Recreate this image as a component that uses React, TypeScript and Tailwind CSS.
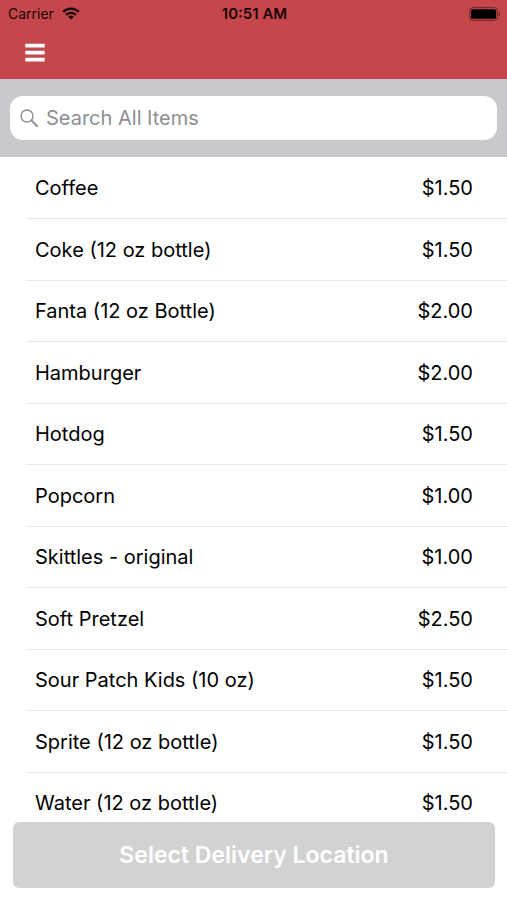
const items = [
  { name: "Coffee", price: "$1.50" },
  { name: "Coke (12 oz bottle)", price: "$1.50" },
  { name: "Fanta (12 oz Bottle)", price: "$2.00" },
  { name: "Hamburger", price: "$2.00" },
  { name: "Hotdog", price: "$1.50" },
  { name: "Popcorn", price: "$1.00" },
  { name: "Skittles - original", price: "$1.00" },
  { name: "Soft Pretzel", price: "$2.50" },
  { name: "Sour Patch Kids (10 oz)", price: "$1.50" },
  { name: "Sprite (12 oz bottle)", price: "$1.50" },
  { name: "Water (12 oz bottle)", price: "$1.50" },
];

function WifiIcon() {
  return (
    <svg className="w-[18px] h-[13px]" viewBox="0 0 18 13" fill="none" stroke="currentColor" strokeWidth={2.3}>
      <path d="M1.2 4.9a11 11 0 0 1 15.6 0" />
      <path d="M4.1 7.9a6.9 6.9 0 0 1 9.8 0" />
      <path d="M9 12.6 6.2 9.9a4 4 0 0 1 5.6 0Z" fill="currentColor" stroke="none" />
    </svg>
  );
}

function BatteryIcon() {
  return (
    <svg className="w-8 h-[14px]" viewBox="0 0 32 14">
      <rect x="0.7" y="0.7" width="27.6" height="12.6" rx="3" fill="none" stroke="black" strokeOpacity="0.5" />
      <rect x="2" y="2.2" width="25" height="9.6" rx="1.6" fill="black" />
      <path d="M29.8 4.8v4.4c1.7-.7 1.7-3.7 0-4.4Z" fill="black" fillOpacity="0.5" />
    </svg>
  );
}

function StatusBar() {
  return (
    <div className="grid grid-cols-3 items-center h-[27px] pl-2 pr-[6px] text-sm text-[#1a0506]">
      <div className="flex items-center gap-2">
        <span>Carrier</span>
        <WifiIcon />
      </div>
      <span className="text-center text-[15px] font-semibold">10:51 AM</span>
      <div className="flex justify-end">
        <BatteryIcon />
      </div>
    </div>
  );
}

export default function App() {
  return (
    <div className="flex flex-col h-screen bg-white text-black font-['Inter',sans-serif]">
      {/* Header */}
      <header className="bg-[#c5474c]">
        <StatusBar />
        <div className="flex items-center h-[52px] px-[25px]">
          <button type="button" aria-label="Menu" className="text-white">
            <svg className="w-5 h-5" viewBox="0 0 20 20" fill="currentColor">
              <rect x="0.3" y="0.8" width="19.4" height="3.8" rx="0.8" />
              <rect x="0.3" y="7.8" width="19.4" height="3.8" rx="0.8" />
              <rect x="0.3" y="14.8" width="19.4" height="3.8" rx="0.8" />
            </svg>
          </button>
        </div>
      </header>

      {/* Search */}
      <div className="bg-[#c9c8cd] px-[10px] py-[17px]">
        <label className="flex items-center gap-2 h-11 pl-[10px] pr-3 rounded-[13px] bg-white">
          <svg className="w-[18px] h-[18px] shrink-0 text-[#8e8e93]" viewBox="0 0 18 18" fill="none" stroke="currentColor">
            <circle cx="7" cy="7" r="6" strokeWidth={1.4} />
            <path d="m11.4 11.4 5.6 5.6" strokeWidth={2} strokeLinecap="round" />
          </svg>
          <input
            type="search"
            aria-label="Search All Items"
            placeholder="Search All Items"
            className="flex-1 min-w-0 text-xl outline-none placeholder:text-[#8e8e93]"
          />
        </label>
      </div>

      {/* Item list */}
      <main className="flex-1 min-h-0 pt-px overflow-y-auto [scrollbar-width:none]">
        <ul className="pl-[26px]">
          {items.map((item) => (
            <li
              key={item.name}
              className="flex items-center justify-between odd:h-[61px] even:h-[62px] pl-[9px] pr-[34px] border-b border-[#e9e9eb] text-xl"
            >
              <span>{item.name}</span>
              <span>{item.price}</span>
            </li>
          ))}
        </ul>
      </main>

      {/* Footer */}
      <footer className="pl-[13px] pr-3 pb-3">
        <button
          type="button"
          className="w-full h-[66px] rounded-md bg-[#d2d2d2] text-white text-[23px] font-semibold"
        >
          Select Delivery Location
        </button>
      </footer>
    </div>
  );
}
